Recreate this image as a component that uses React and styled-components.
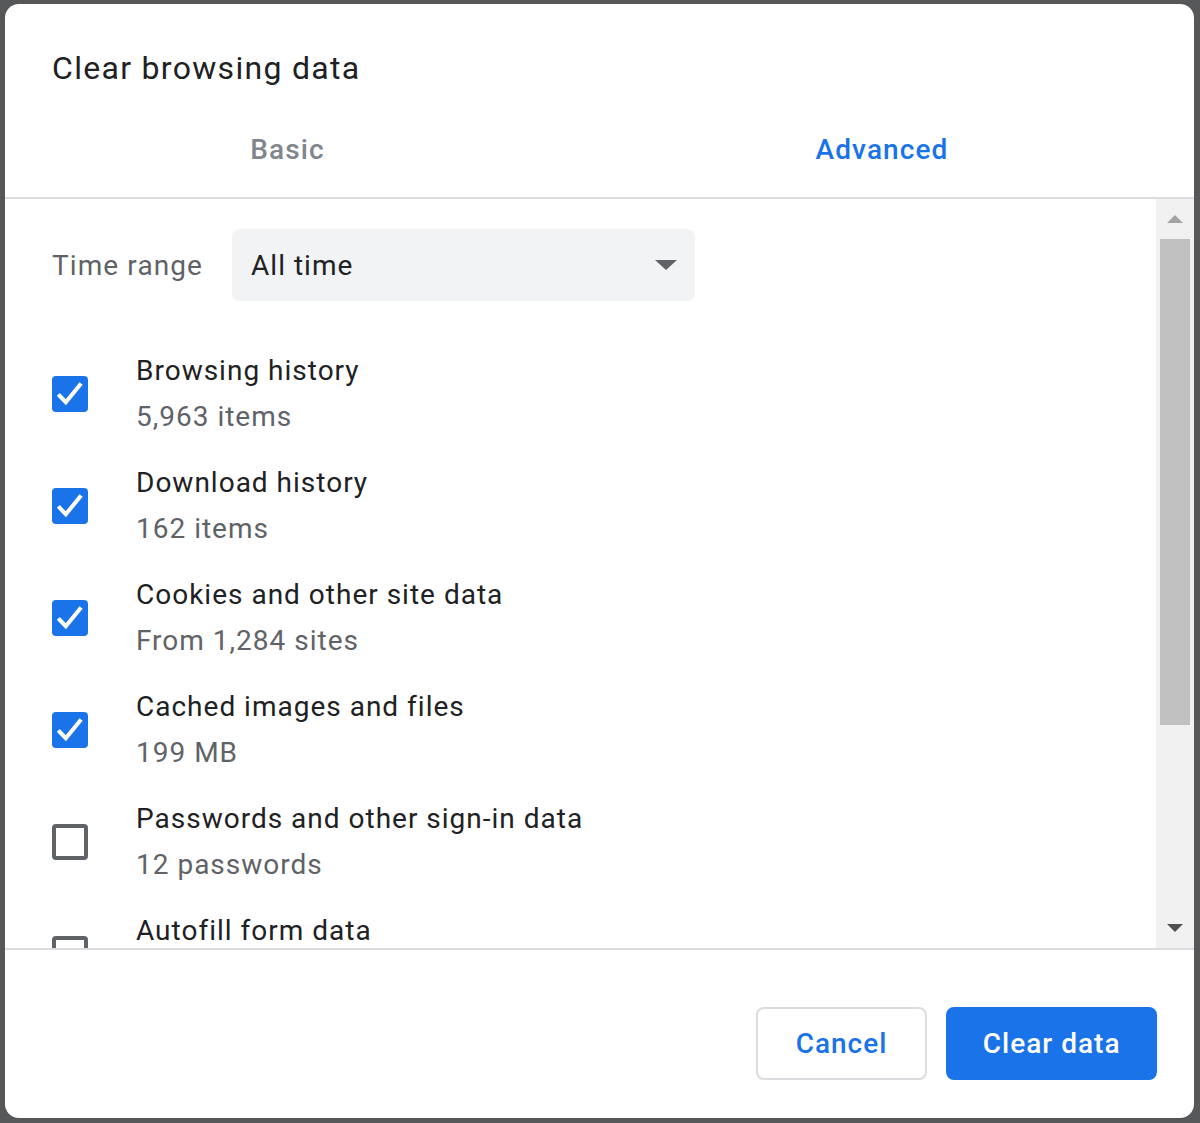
import React from 'react';
import styled, { createGlobalStyle } from 'styled-components';

const GlobalStyle = createGlobalStyle`
  html, body {
    margin: 0;
    padding: 0;
    background: #555759;
  }
  body {
    font-family: Roboto, "Liberation Sans", sans-serif;
    -webkit-font-smoothing: antialiased;
  }
`;

const items = [
  { title: 'Browsing history', sub: '5,963 items', checked: true },
  { title: 'Download history', sub: '162 items', checked: true },
  { title: 'Cookies and other site data', sub: 'From 1,284 sites', checked: true },
  { title: 'Cached images and files', sub: '199 MB', checked: true },
  { title: 'Passwords and other sign-in data', sub: '12 passwords', checked: false },
  { title: 'Autofill form data', sub: '', checked: false },
];

const App = () => {
  return (
    <>
      <GlobalStyle />
      <Page>
        <Dialog>
          <Title>Clear browsing data</Title>
          <TabRow>
            <Tab>Basic</Tab>
            <Tab active>Advanced</Tab>
          </TabRow>
          <Body>
            <ScrollContent>
              <TimeRow>
                <TimeLabel>Time range</TimeLabel>
                <Select>
                  <span>All time</span>
                  <Arrow />
                </Select>
              </TimeRow>
              {items.map((item) => (
                <CheckRow key={item.title}>
                  <Checkbox checked={item.checked}>
                    {item.checked && (
                      <svg width="36" height="36" viewBox="0 0 24 24">
                        <path d="M4.2 12.2l5 5.3L19.4 5" fill="none" stroke="#fff" strokeWidth="2.7" />
                      </svg>
                    )}
                  </Checkbox>
                  <CheckText>
                    <ItemTitle>{item.title}</ItemTitle>
                    {item.sub && <ItemSub>{item.sub}</ItemSub>}
                  </CheckText>
                </CheckRow>
              ))}
            </ScrollContent>
            <Scrollbar>
              <ScrollArrow>
                <svg width="16" height="8" viewBox="0 0 16 8">
                  <path d="M0 8L8 0L16 8Z" fill="#a3a3a3" />
                </svg>
              </ScrollArrow>
              <Track>
                <Thumb />
              </Track>
              <ScrollArrow>
                <svg width="16" height="8" viewBox="0 0 16 8">
                  <path d="M0 0L8 8L16 0Z" fill="#505050" />
                </svg>
              </ScrollArrow>
            </Scrollbar>
          </Body>
          <Footer>
            <Button>Cancel</Button>
            <Button primary>Clear data</Button>
          </Footer>
        </Dialog>
      </Page>
    </>
  );
};

const Page = styled.div`
  width: 1200px;
  height: 1123px;
  padding: 4px 6px 5px 5px;
  box-sizing: border-box;
`;

const Dialog = styled.div`
  height: 100%;
  background: #fff;
  border-radius: 14px;
  display: flex;
  flex-direction: column;
  overflow: hidden;
`;

const Title = styled.h1`
  margin: 0;
  padding: 44px 47px 0;
  font-size: 32px;
  line-height: 40px;
  font-weight: 400;
  letter-spacing: 1.3px;
  color: #202124;
`;

const TabRow = styled.div`
  display: grid;
  grid-template-columns: 565px 1fr;
  margin-top: 32px;
  border-bottom: 2px solid #dadce0;
`;

const Tab = styled.div`
  text-align: center;
  padding: 10px 0 27px;
  line-height: 40px;
  font-size: 28px;
  font-weight: 500;
  letter-spacing: 1.1px;
  color: ${(p) => (p.active ? '#1a73e8' : '#80868b')};
`;

const Body = styled.div`
  height: 749px;
  display: flex;
  border-bottom: 2px solid #dadce0;
`;

const ScrollContent = styled.div`
  flex: 1;
  overflow: hidden;
  padding: 30px 0 0 47px;
`;

const TimeRow = styled.div`
  display: flex;
  align-items: center;
  gap: 29px;
  margin-bottom: 37px;
`;

const TimeLabel = styled.span`
  font-size: 28px;
  letter-spacing: 1.1px;
  color: #5f6368;
`;

const Select = styled.div`
  width: 463px;
  height: 72px;
  box-sizing: border-box;
  background: #f1f3f4;
  border-radius: 8px;
  padding: 0 18px 0 19px;
  display: flex;
  align-items: center;
  justify-content: space-between;
  font-size: 28px;
  letter-spacing: 1px;
  color: #202124;
`;

const Arrow = styled.span`
  width: 0;
  height: 0;
  border-left: 11px solid transparent;
  border-right: 11px solid transparent;
  border-top: 10px solid #5f6368;
`;

const CheckRow = styled.div`
  height: 112px;
  display: flex;
  align-items: center;
  gap: 48px;
`;

const Checkbox = styled.div`
  width: 36px;
  height: 36px;
  box-sizing: border-box;
  border-radius: 4px;
  flex-shrink: 0;
  background: ${(p) => (p.checked ? '#1a73e8' : 'transparent')};
  border: ${(p) => (p.checked ? 'none' : '4px solid #5f6368')};
  display: flex;
  align-items: center;
  justify-content: center;
`;

const CheckText = styled.div`
  min-height: 92px;
  display: flex;
  flex-direction: column;
`;

const ItemTitle = styled.div`
  font-size: 28px;
  line-height: 46px;
  letter-spacing: 1px;
  color: #202124;
`;

const ItemSub = styled.div`
  font-size: 28px;
  line-height: 46px;
  letter-spacing: 1px;
  color: #5f6368;
`;

const Scrollbar = styled.div`
  width: 38px;
  background: #f1f1f1;
  display: flex;
  flex-direction: column;
`;

const ScrollArrow = styled.div`
  height: 40px;
  display: flex;
  align-items: center;
  justify-content: center;
`;

const Track = styled.div`
  flex: 1;
  padding: 0 4px;
`;

const Thumb = styled.div`
  height: 486px;
  background: #c1c1c1;
`;

const Footer = styled.div`
  flex: 1;
  display: flex;
  justify-content: flex-end;
  align-items: flex-start;
  gap: 19px;
  padding: 57px 37px 0 0;
`;

const Button = styled.button`
  height: 73px;
  padding: 0 ${(p) => (p.primary ? '34.5px' : '38px')};
  border-radius: 8px;
  font-family: Roboto, "Liberation Sans", sans-serif;
  font-size: 28px;
  font-weight: 500;
  letter-spacing: 1px;
  background: ${(p) => (p.primary ? '#1a73e8' : '#fff')};
  color: ${(p) => (p.primary ? '#fff' : '#1a73e8')};
  border: 2px solid ${(p) => (p.primary ? '#1a73e8' : '#dadce0')};
`;

export default App;
